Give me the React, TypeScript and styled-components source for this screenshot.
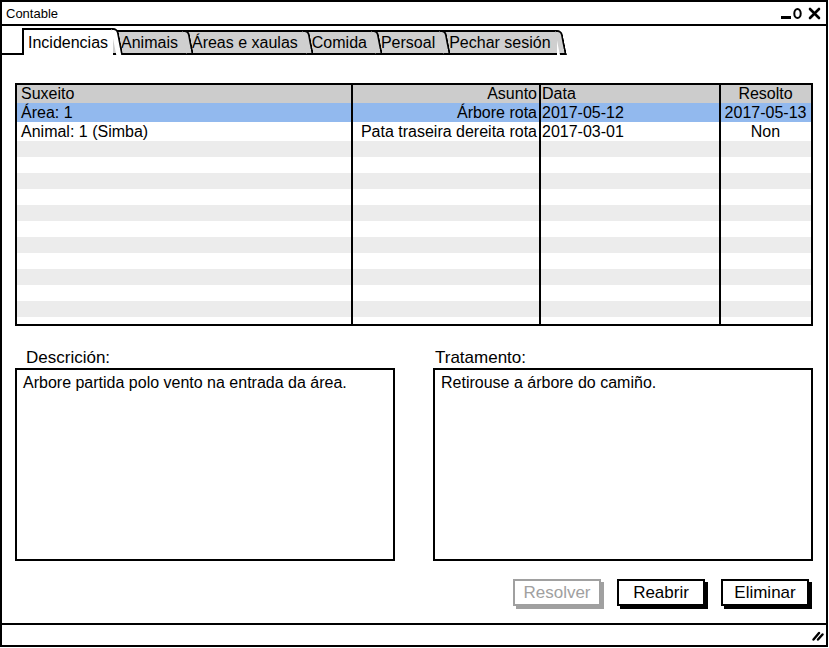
import { type FC } from "react";
import styled, { createGlobalStyle } from "styled-components";

const GlobalStyle = createGlobalStyle`
    body {
        margin: 0;
        background: #fff;
        font-family: "Liberation Sans", Arial, sans-serif;
        color: #000;
    }
`;

type Align = 'left' | 'right' | 'center';

interface IIncident {
    subject: string;
    matter: string;
    date: string;
    resolved: string;
}

const incidents: IIncident[] = [
    { subject: 'Área: 1', matter: 'Árbore rota', date: '2017-05-12', resolved: '2017-05-13' },
    { subject: 'Animal: 1 (Simba)', matter: 'Pata traseira dereita rota', date: '2017-03-01', resolved: 'Non' },
];

const tabs = ['Incidencias', 'Animais', 'Áreas e xaulas', 'Comida', 'Persoal', 'Pechar sesión'];

const EMPTY_ROWS = 12;

const WindowControls: FC = () => (
    <svg width="42" height="13" viewBox="0 0 42 13">
        <rect x="0" y="9" width="10" height="3" fill="#000" />
        <ellipse cx="16.5" cy="6.5" rx="3.2" ry="4.6" fill="none" stroke="#000" strokeWidth="2" />
        <path d="M29 2 L38 11 M38 2 L29 11" stroke="#000" strokeWidth="2.6" strokeLinecap="round" />
    </svg>
);

const ResizeGrip: FC = () => (
    <svg width="12" height="12" viewBox="0 0 12 12">
        <path d="M1.5 10.5 L7 4 M6 10.5 L10.5 5.5" stroke="#000" strokeWidth="2.4" strokeLinecap="round" />
    </svg>
);

const App: FC = () => {
    return (
        <>
            <GlobalStyle />
            <Window>
                <TitleBar>
                    <span>Contable</span>
                    <WindowControls />
                </TitleBar>

                <TabStrip>
                    <TabSpacer />
                    {tabs.map((label, i) => (
                        <Tab key={label} $active={i === 0} style={{ zIndex: tabs.length - i }}>
                            {label}
                        </Tab>
                    ))}
                </TabStrip>

                <Content>
                    <Table>
                        <HeaderRow>
                            <Cell $align="left">Suxeito</Cell>
                            <Cell $align="right" $divider>Asunto</Cell>
                            <Cell $align="left" $divider>Data</Cell>
                            <Cell $align="center" $divider>Resolto</Cell>
                        </HeaderRow>
                        {incidents.map((row, i) => (
                            <DataRow key={row.subject} $selected={i === 0}>
                                <Cell $align="left">{row.subject}</Cell>
                                <Cell $align="right" $divider>{row.matter}</Cell>
                                <Cell $align="left" $divider>{row.date}</Cell>
                                <Cell $align="center" $divider>{row.resolved}</Cell>
                            </DataRow>
                        ))}
                        {Array.from({ length: EMPTY_ROWS }).map((_, i) => (
                            <EmptyRow key={i} $striped={i % 2 === 0}>
                                <Cell $align="left" />
                                <Cell $align="right" $divider />
                                <Cell $align="left" $divider />
                                <Cell $align="center" $divider />
                            </EmptyRow>
                        ))}
                    </Table>

                    <Fields>
                        <Field>
                            <FieldLabel $indent={11}>Descrición:</FieldLabel>
                            <TextBox>Arbore partida polo vento na entrada da área.</TextBox>
                        </Field>
                        <Field>
                            <FieldLabel $indent={2}>Tratamento:</FieldLabel>
                            <TextBox>Retirouse a árbore do camiño.</TextBox>
                        </Field>
                    </Fields>

                    <Actions>
                        <Button $disabled>Resolver</Button>
                        <Button>Reabrir</Button>
                        <Button>Eliminar</Button>
                    </Actions>
                </Content>

                <StatusBar>
                    <ResizeGrip />
                </StatusBar>
            </Window>
        </>
    );
};

export default App;

const Window = styled.div`
    width: 828px;
    height: 647px;
    box-sizing: border-box;
    border: 2px solid #000;
    display: flex;
    flex-direction: column;
    background: #fff;
    overflow: hidden;
`;

const TitleBar = styled.div`
    height: 22px;
    border-bottom: 2px solid #000;
    display: flex;
    align-items: center;
    justify-content: space-between;
    padding: 0 3px 0 4px;
    font-size: 13px;
`;

const TabStrip = styled.div`
    height: 29px;
    display: flex;
    align-items: flex-end;
`;

const TabSpacer = styled.div`
    width: 20px;
    border-bottom: 2px solid #000;
`;

// the first tab is the open one: white, taller, no bottom line
const Tab = styled.div<{ $active?: boolean }>`
    position: relative;
    box-sizing: border-box;
    height: ${(p) => (p.$active ? 27 : 25)}px;
    padding: ${(p) => (p.$active ? '0 5px 0 4px' : '0 6px 0 8px')};
    background: ${(p) => (p.$active ? '#fff' : '#cfcfcf')};
    border-top: 2px solid #000;
    border-left: ${(p) => (p.$active ? '2px solid #000' : 'none')};
    border-bottom: ${(p) => (p.$active ? 'none' : '2px solid #000')};
    font-size: 16px;
    line-height: ${(p) => (p.$active ? 25 : 21)}px;
    white-space: nowrap;

    &::after {
        content: '';
        position: absolute;
        top: -2px;
        bottom: ${(p) => (p.$active ? '0' : '-2px')};
        right: -5px;
        width: 7px;
        box-sizing: border-box;
        background: inherit;
        border-top: 2px solid #000;
        border-right: 2px solid #000;
        border-bottom: ${(p) => (p.$active ? 'none' : '2px solid #000')};
        border-top-right-radius: 5px;
        transform: skewX(11deg);
        transform-origin: top right;
    }
`;

const Content = styled.div`
    flex: 1;
    display: flex;
    flex-direction: column;
    padding: 28px 13px 0 13px;
`;

const Table = styled.div`
    height: 243px;
    box-sizing: border-box;
    border: 2px solid #000;
    overflow: hidden;
    display: flex;
    flex-direction: column;
    font-size: 16px;
`;

const RowBase = styled.div`
    display: grid;
    grid-template-columns: 334px 188px 180px 1fr;
    flex-shrink: 0;
`;

const HeaderRow = styled(RowBase)`
    height: 18px;
    line-height: 18px;
    background: #cccccc;
`;

const DataRow = styled(RowBase)<{ $selected?: boolean }>`
    height: 19px;
    line-height: 19px;
    background: ${(p) => (p.$selected ? '#92b9ee' : '#fff')};
`;

const EmptyRow = styled(RowBase)<{ $striped?: boolean }>`
    height: 16px;
    background: ${(p) => (p.$striped ? '#ececec' : '#fff')};
`;

const Cell = styled.div<{ $align: Align; $divider?: boolean }>`
    box-sizing: border-box;
    padding: 0 2px 0 ${(p) => (p.$divider ? 1 : 4)}px;
    border-left: ${(p) => (p.$divider ? '2px solid #000' : 'none')};
    text-align: ${(p) => p.$align};
    white-space: nowrap;
    overflow: hidden;
`;

const Fields = styled.div`
    display: grid;
    grid-template-columns: 380px 380px;
    column-gap: 38px;
    margin-top: 22px;
`;

const Field = styled.div`
    display: flex;
    flex-direction: column;
`;

const FieldLabel = styled.div<{ $indent: number }>`
    height: 20px;
    line-height: 20px;
    padding-left: ${(p) => p.$indent}px;
    font-size: 17px;
`;

const TextBox = styled.div`
    height: 193px;
    box-sizing: border-box;
    border: 2px solid #000;
    padding: 3px 6px;
    font-size: 16px;
    line-height: 20px;
`;

const Actions = styled.div`
    display: flex;
    justify-content: flex-end;
    gap: 16px;
    margin-top: 18px;
    padding-right: 4px;
`;

const Button = styled.div<{ $disabled?: boolean }>`
    width: 88px;
    height: 27px;
    box-sizing: border-box;
    border: 2px solid ${(p) => (p.$disabled ? '#a0a0a0' : '#000')};
    box-shadow: 3px 3px 0 ${(p) => (p.$disabled ? '#a0a0a0' : '#000')};
    color: ${(p) => (p.$disabled ? '#a0a0a0' : '#000')};
    display: flex;
    align-items: center;
    justify-content: center;
    font-size: 17px;
    background: #fff;
`;

const StatusBar = styled.div`
    height: 20px;
    border-top: 2px solid #000;
    display: flex;
    align-items: center;
    justify-content: flex-end;
    padding-right: 2px;
`;
